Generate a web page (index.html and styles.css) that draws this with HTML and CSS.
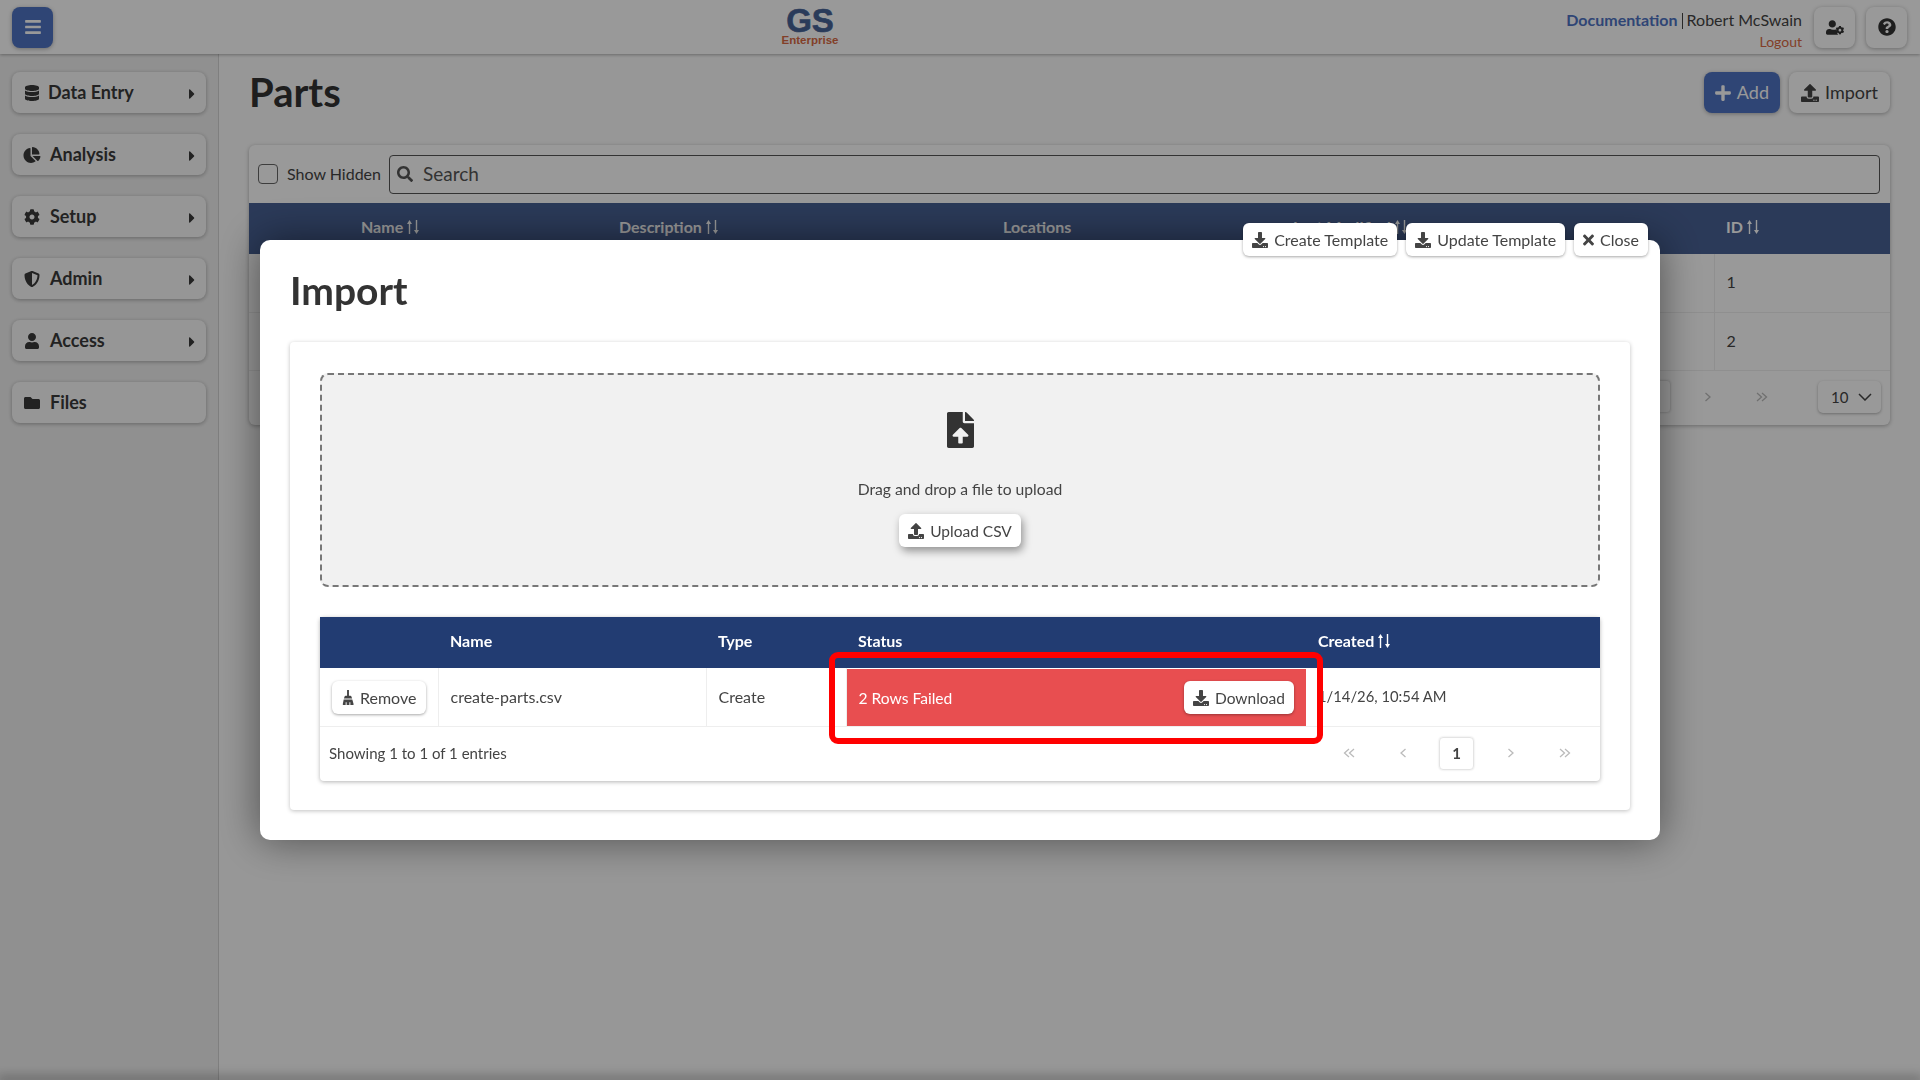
FILE: index.html
```html
<!DOCTYPE html>
<html lang="en">
<head>
  <meta charset="UTF-8" />
  <title>Parts</title>
  <link rel="stylesheet" href="styles.css">
</head>
<body>

  <svg class="sprite" xmlns="http://www.w3.org/2000/svg">
    <symbol id="i-bars" viewBox="0 0 448 512"><path d="M16 132h416c8.837 0 16-7.163 16-16V76c0-8.837-7.163-16-16-16H16C7.163 60 0 67.163 0 76v40c0 8.837 7.163 16 16 16zm0 160h416c8.837 0 16-7.163 16-16v-40c0-8.837-7.163-16-16-16H16c-8.837 0-16 7.163-16 16v40c0 8.837 7.163 16 16 16zm0 160h416c8.837 0 16-7.163 16-16v-40c0-8.837-7.163-16-16-16H16c-8.837 0-16 7.163-16 16v40c0 8.837 7.163 16 16 16z"/></symbol>
    <symbol id="i-database" viewBox="0 0 448 512"><path d="M448 73.143v45.714C448 159.143 347.667 192 224 192S0 159.143 0 118.857V73.143C0 32.857 100.333 0 224 0s224 32.857 224 73.143zM448 176v102.857C448 319.143 347.667 352 224 352S0 319.143 0 278.857V176c48.125 33.143 136.208 48.572 224 48.572S399.874 209.143 448 176zm0 160v102.857C448 479.143 347.667 512 224 512S0 479.143 0 438.857V336c48.125 33.143 136.208 48.572 224 48.572S399.874 369.143 448 336z"/></symbol>
    <symbol id="i-pie" viewBox="0 0 544 512"><path d="M527.79 288H290.5l158.03 158.03c6.04 6.04 15.98 6.53 22.19.68 38.7-36.46 65.32-85.61 73.13-140.86 1.34-9.46-6.51-17.85-16.06-17.85zm-15.83-64.8C503.72 103.74 408.26 8.28 288.8.04 279.68-.59 272 7.1 272 16.24V240h223.77c9.14 0 16.82-7.68 16.19-16.8zM224 288V50.71c0-9.55-8.39-17.4-17.84-16.06C86.99 51.49-4.1 155.6.14 280.37 4.5 408.51 114.83 513.59 243.03 511.98c50.4-.63 96.97-16.87 135.26-44.03 7.9-5.6 8.42-17.23 1.57-24.08L224 288z"/></symbol>
    <symbol id="i-cog" viewBox="0 0 512 512"><path d="M487.4 315.7l-42.6-24.6c4.3-23.2 4.3-47 0-70.2l42.6-24.6c4.9-2.8 7.1-8.6 5.5-14-11.1-35.6-30-67.8-54.7-94.6-3.8-4.1-10-5.1-14.8-2.3L380.8 110c-17.9-15.4-38.5-27.3-60.8-35.1V25.8c0-5.6-3.9-10.5-9.4-11.7-36.7-8.2-74.3-7.8-109.2 0-5.5 1.2-9.4 6.1-9.4 11.7V75c-22.2 7.9-42.8 19.8-60.8 35.1L88.7 85.5c-4.9-2.8-11-1.9-14.8 2.3-24.7 26.7-43.6 58.9-54.7 94.6-1.7 5.4.6 11.2 5.5 14L67.3 221c-4.3 23.2-4.3 47 0 70.2l-42.6 24.6c-4.9 2.8-7.1 8.6-5.5 14 11.1 35.6 30 67.8 54.7 94.6 3.8 4.1 10 5.1 14.8 2.3l42.6-24.6c17.9 15.4 38.5 27.3 60.8 35.1v49.2c0 5.6 3.9 10.5 9.4 11.7 36.7 8.2 74.3 7.8 109.2 0 5.5-1.2 9.4-6.1 9.4-11.7v-49.2c22.2-7.9 42.8-19.8 60.8-35.1l42.6 24.6c4.9 2.8 11 1.9 14.8-2.3 24.7-26.7 43.6-58.9 54.7-94.6 1.5-5.5-.7-11.3-5.6-14.1zM256 336c-44.1 0-80-35.9-80-80s35.9-80 80-80 80 35.9 80 80-35.9 80-80 80z"/></symbol>
    <symbol id="i-shield" viewBox="0 0 512 512"><path d="M466.5 83.7l-192-80a48.15 48.15 0 0 0-36.9 0l-192 80C27.7 91.1 16 108.6 16 128c0 198.5 114.5 335.7 221.5 380.3 11.8 4.9 25.1 4.9 36.9 0C360.1 472.6 496 349.3 496 128c0-19.4-11.7-36.9-29.5-44.3zM256.1 446.3l-.1-381 175.9 73.3c-3.3 151.4-82.1 261.1-175.8 307.7z"/></symbol>
    <symbol id="i-user" viewBox="0 0 448 512"><path d="M224 256c70.7 0 128-57.3 128-128S294.7 0 224 0 96 57.3 96 128s57.3 128 128 128zm89.6 32h-16.7c-22.2 10.2-46.9 16-72.9 16s-50.6-5.8-72.9-16h-16.7C60.2 288 0 348.2 0 422.4V464c0 26.5 21.5 48 48 48h352c26.5 0 48-21.5 48-48v-41.6c0-74.2-60.2-134.4-134.4-134.4z"/></symbol>
    <symbol id="i-folder" viewBox="0 0 512 512"><path d="M464 128H272l-64-64H48C21.49 64 0 85.49 0 112v288c0 26.51 21.49 48 48 48h416c26.51 0 48-21.49 48-48V176c0-26.51-21.49-48-48-48z"/></symbol>
    <symbol id="i-caret" viewBox="0 0 192 512"><path d="M0 384.662V127.338c0-17.818 21.543-26.741 34.142-14.142l128.662 128.662c7.81 7.81 7.81 20.474 0 28.284L34.142 398.804C21.543 411.404 0 402.48 0 384.662z"/></symbol>
    <symbol id="i-user-cog" viewBox="0 0 640 512"><path d="M610.5 373.3c2.6-14.1 2.6-28.5 0-42.6l25.8-14.9c3-1.7 4.3-5.2 3.3-8.5-6.7-21.6-18.2-41.2-33.2-57.4-2.3-2.5-6-3.1-9-1.4l-25.8 14.9c-10.9-9.3-23.4-16.5-36.9-21.3v-29.8c0-3.4-2.4-6.4-5.7-7.1-22.3-5-45-4.8-66.2 0-3.3.7-5.7 3.7-5.7 7.1v29.8c-13.5 4.8-26 12-36.9 21.3l-25.8-14.9c-2.9-1.7-6.7-1.1-9 1.4-15 16.2-26.5 35.8-33.2 57.4-1 3.3.4 6.8 3.3 8.5l25.8 14.9c-2.6 14.1-2.6 28.5 0 42.6l-25.8 14.9c-3 1.7-4.3 5.2-3.3 8.5 6.7 21.6 18.2 41.1 33.2 57.4 2.3 2.5 6 3.1 9 1.4l25.8-14.9c10.9 9.3 23.4 16.5 36.9 21.3v29.8c0 3.4 2.4 6.4 5.7 7.1 22.3 5 45 4.8 66.2 0 3.3-.7 5.7-3.7 5.7-7.1v-29.8c13.5-4.8 26-12 36.9-21.3l25.8 14.9c2.9 1.7 6.7 1.1 9-1.4 15-16.2 26.5-35.8 33.2-57.4 1-3.3-.4-6.8-3.3-8.5l-25.8-14.9zM496 400.5c-26.8 0-48.5-21.8-48.5-48.5s21.8-48.5 48.5-48.5 48.5 21.8 48.5 48.5-21.7 48.5-48.5 48.5zM224 256c70.7 0 128-57.3 128-128S294.7 0 224 0 96 57.3 96 128s57.3 128 128 128zm201.2 226.5c-2.3 0-4.6-.3-6.8-1-4.6-1.4-8.7-4-11.9-7.5-16.4-17.7-29-39.4-36.3-62.6-3.7-11.9 1.2-24.6 11.7-30.7l4.4-2.5c-.5-3.3-.5-8.7 0-12l-4.4-2.5c-10.5-6.1-15.4-18.8-11.7-30.7.9-2.7 2-5.3 3.1-8-2.1-.2-4.1-.6-6.2-.6h-16.7c-22.2 10.2-46.9 16-72.9 16s-50.6-5.8-72.9-16h-16.7C60.2 288 0 348.2 0 422.4V464c0 26.5 21.5 48 48 48h352c8.7 0 16.9-2.4 24-6.5-1-5.5 1.2-11.4 1.2-23z"/></symbol>
    <symbol id="i-question" viewBox="0 0 512 512"><path d="M504 256c0 136.997-111.043 248-248 248S8 392.997 8 256C8 119.083 119.043 8 256 8s248 111.083 248 248zM262.655 90c-54.497 0-89.255 22.957-116.549 63.758-3.536 5.286-2.353 12.415 2.715 16.258l34.699 26.31c5.205 3.947 12.621 3.008 16.665-2.122 17.864-22.658 30.113-35.797 57.303-35.797 20.429 0 45.698 13.148 45.698 32.958 0 14.976-12.363 22.667-32.534 33.976C247.128 238.528 216 254.941 216 296v4c0 6.627 5.373 12 12 12h56c6.627 0 12-5.373 12-12v-1.333c0-28.462 83.186-29.647 83.186-106.667 0-58.002-60.165-102-116.531-102zM256 338c-25.365 0-46 20.635-46 46 0 25.364 20.635 46 46 46s46-20.636 46-46c0-25.365-20.635-46-46-46z"/></symbol>
    <symbol id="i-plus" viewBox="0 0 448 512"><path d="M416 208H272V64c0-17.67-14.33-32-32-32h-32c-17.67 0-32 14.33-32 32v144H32c-17.67 0-32 14.33-32 32v32c0 17.67 14.33 32 32 32h144v144c0 17.67 14.33 32 32 32h32c17.67 0 32-14.33 32-32V304h144c17.67 0 32-14.33 32-32v-32c0-17.67-14.33-32-32-32z"/></symbol>
    <symbol id="i-upload" viewBox="0 0 512 512"><path d="M296 384h-80c-13.3 0-24-10.7-24-24V192h-87.7c-17.8 0-26.7-21.5-14.1-34.1L242.3 5.7c7.5-7.5 19.8-7.5 27.3 0l152.2 152.2c12.6 12.6 3.7 34.1-14.1 34.1H320v168c0 13.3-10.7 24-24 24zm216-8v112c0 13.3-10.7 24-24 24H24c-13.3 0-24-10.7-24-24V376c0-13.3 10.7-24 24-24h136v8c0 30.9 25.1 56 56 56h80c30.9 0 56-25.1 56-56v-8h136c13.3 0 24 10.7 24 24zm-124 88c0-11-9-20-20-20s-20 9-20 20 9 20 20 20 20-9 20-20zm64 0c0-11-9-20-20-20s-20 9-20 20 9 20 20 20 20-9 20-20z"/></symbol>
    <symbol id="i-download" viewBox="0 0 512 512"><path d="M216 0h80c13.3 0 24 10.7 24 24v168h87.7c17.8 0 26.7 21.5 14.1 34.1L269.7 378.3c-7.5 7.5-19.8 7.5-27.3 0L90.1 226.1c-12.6-12.6-3.7-34.1 14.1-34.1H192V24c0-13.3 10.7-24 24-24zm296 376v112c0 13.3-10.7 24-24 24H24c-13.3 0-24-10.7-24-24V376c0-13.3 10.7-24 24-24h146.7l49 49c20.1 20.1 52.5 20.1 72.6 0l49-49H488c13.3 0 24 10.7 24 24zm-124 88c0-11-9-20-20-20s-20 9-20 20 9 20 20 20 20-9 20-20zm64 0c0-11-9-20-20-20s-20 9-20 20 9 20 20 20 20-9 20-20z"/></symbol>
    <symbol id="i-times" viewBox="0 0 352 512"><path d="M242.72 256l100.07-100.07c12.28-12.28 12.28-32.19 0-44.48l-22.24-22.24c-12.28-12.28-32.19-12.28-44.48 0L176 189.28 75.93 89.21c-12.28-12.28-32.19-12.28-44.48 0L9.21 111.45c-12.28 12.28-12.28 32.19 0 44.48L109.28 256 9.21 356.07c-12.28 12.28-12.28 32.19 0 44.48l22.24 22.24c12.28 12.28 32.2 12.28 44.48 0L176 322.72l100.07 100.07c12.28 12.28 32.2 12.28 44.48 0l22.24-22.24c12.28-12.28 12.28-32.19 0-44.48L242.72 256z"/></symbol>
    <symbol id="i-search" viewBox="0 0 512 512"><path d="M505 442.7L405.3 343c-4.5-4.5-10.6-7-17-7H372c27.6-35.3 44-79.7 44-128C416 93.1 322.9 0 208 0S0 93.1 0 208s93.1 208 208 208c48.3 0 92.7-16.4 128-44v16.3c0 6.4 2.5 12.5 7 17l99.7 99.7c9.4 9.4 24.6 9.4 33.9 0l28.3-28.3c9.4-9.4 9.4-24.6.1-34zM208 336c-70.7 0-128-57.2-128-128 0-70.7 57.2-128 128-128 70.7 0 128 57.2 128 128 0 70.7-57.2 128-128 128z"/></symbol>
    <symbol id="i-file-upload" viewBox="0 0 384 512"><path d="M224 136V0H24C10.7 0 0 10.7 0 24v464c0 13.3 10.7 24 24 24h336c13.3 0 24-10.7 24-24V160H248c-13.2 0-24-10.8-24-24zm65.18 216.01H224v80c0 8.84-7.16 16-16 16h-32c-8.84 0-16-7.16-16-16v-80H94.82c-14.28 0-21.41-17.29-11.27-27.36l96.42-95.7c6.65-6.61 17.39-6.61 24.04 0l96.42 95.7c10.15 10.07 3.03 27.36-11.25 27.36zM377 105L279.1 7c-4.5-4.5-10.6-7-17-7H256v128h128v-6.1c0-6.3-2.5-12.4-7-16.9z"/></symbol>
    <symbol id="i-broom" viewBox="0 0 12 16"><path d="M5 0h2v6h1.600c.5 0 .9.3 1 .8L10.400 9H1.600l.8-2.200c.1-.5.5-.8 1-.8H5zM1.400 10h9.200l1.400 5.200c.1.400-.2.800-.6.800H8.500V13H7.500v3h-3V13H3.500v3H1c-.4 0-.7-.4-.6-.8z"/></symbol>
    <symbol id="i-sort" viewBox="0 0 14 14"><path d="M3.500 0 6 4H4.200v10H2.800V4H1zM10.500 14 8 10h1.800V0h1.400v10H13z"/></symbol>
    <symbol id="i-first" viewBox="0 0 12 10"><path d="M6 1 1.500 5 6 9M11 1 6.500 5 11 9"/></symbol>
    <symbol id="i-prev" viewBox="0 0 12 10"><path d="M8.500 1 4 5l4.500 4"/></symbol>
    <symbol id="i-next" viewBox="0 0 12 10"><path d="M3.500 1 8 5 3.500 9"/></symbol>
    <symbol id="i-last" viewBox="0 0 12 10"><path d="M1 1l4.500 4L1 9M6 1l4.500 4L6 9"/></symbol>
  </svg>

  <div class="app">

    <header class="topbar">
      <button class="square-button primary menu-button"><svg class="icon"><use href="#i-bars"/></svg></button>
      <div class="logo">
        <span class="logo-top">GS</span>
        <span class="logo-bottom">Enterprise</span>
      </div>
      <div class="user-area">
        <div class="user-text">
          <div><a class="doc-link">Documentation</a><span class="user-sep"></span>Robert McSwain</div>
          <a class="logout">Logout</a>
        </div>
        <button class="square-button"><svg class="icon user-cog"><use href="#i-user-cog"/></svg></button>
        <button class="square-button"><svg class="icon"><use href="#i-question"/></svg></button>
      </div>
    </header>

    <div class="shell">
      <nav class="sidebar">
        <a class="nav-item"><svg class="icon"><use href="#i-database"/></svg><span class="nav-label nav-data">Data Entry</span><svg class="caret"><use href="#i-caret"/></svg></a>
        <a class="nav-item"><svg class="icon"><use href="#i-pie"/></svg><span class="nav-label">Analysis</span><svg class="caret"><use href="#i-caret"/></svg></a>
        <a class="nav-item"><svg class="icon"><use href="#i-cog"/></svg><span class="nav-label">Setup</span><svg class="caret"><use href="#i-caret"/></svg></a>
        <a class="nav-item"><svg class="icon"><use href="#i-shield"/></svg><span class="nav-label">Admin</span><svg class="caret"><use href="#i-caret"/></svg></a>
        <a class="nav-item"><svg class="icon"><use href="#i-user"/></svg><span class="nav-label">Access</span><svg class="caret"><use href="#i-caret"/></svg></a>
        <a class="nav-item"><svg class="icon"><use href="#i-folder"/></svg><span class="nav-label">Files</span></a>
      </nav>

      <main class="content">
        <div class="title-row">
          <h1 class="page-title">Parts</h1>
          <div class="title-actions">
            <button class="btn btn-large primary"><svg class="icon"><use href="#i-plus"/></svg>Add</button>
            <button class="btn btn-large"><svg class="icon"><use href="#i-upload"/></svg>Import</button>
          </div>
        </div>

        <section class="card">
          <div class="toolbar">
            <span class="checkbox"></span>
            <span class="toolbar-label">Show Hidden</span>
            <div class="search">
              <svg class="icon"><use href="#i-search"/></svg>
              <span>Search</span>
            </div>
          </div>
          <table class="grid parts-grid">
            <colgroup>
              <col class="p-actions"><col class="p-name"><col class="p-desc"><col class="p-loc"><col class="p-mod"><col class="p-id">
            </colgroup>
            <thead>
              <tr>
                <th></th>
                <th>Name<svg class="sort"><use href="#i-sort"/></svg></th>
                <th>Description<svg class="sort"><use href="#i-sort"/></svg></th>
                <th>Locations</th>
                <th>Last Modified<svg class="sort"><use href="#i-sort"/></svg></th>
                <th>ID<svg class="sort"><use href="#i-sort"/></svg></th>
              </tr>
            </thead>
            <tbody>
              <tr><td></td><td></td><td></td><td></td><td></td><td>1</td></tr>
              <tr><td></td><td></td><td></td><td></td><td></td><td>2</td></tr>
            </tbody>
          </table>
          <div class="grid-footer parts-footer">
            <div class="pager">
              <span class="page-link"><svg class="page-arrow"><use href="#i-first"/></svg></span>
              <span class="page-link"><svg class="page-arrow"><use href="#i-prev"/></svg></span>
              <span class="page-link current">1</span>
              <span class="page-link"><svg class="page-arrow"><use href="#i-next"/></svg></span>
              <span class="page-link"><svg class="page-arrow"><use href="#i-last"/></svg></span>
            </div>
            <div class="page-size">10<svg viewBox="0 0 14 8"><path d="M1 1l6 6 6-6" fill="none" stroke="currentColor" stroke-width="1.500"/></svg></div>
          </div>
        </section>
      </main>
    </div>

    <div class="bottom-edge"></div>
  </div>

  <!-- Import dialog -->
  <div class="overlay">
    <div class="modal">
      <div class="modal-actions">
        <button class="btn btn-small"><svg class="icon"><use href="#i-download"/></svg>Create Template</button>
        <button class="btn btn-small"><svg class="icon"><use href="#i-download"/></svg>Update Template</button>
        <button class="btn btn-small"><svg class="icon icon-times"><use href="#i-times"/></svg>Close</button>
      </div>
      <h1 class="page-title">Import</h1>
      <section class="modal-card">
        <div class="dropzone">
          <svg class="icon drop-icon"><use href="#i-file-upload"/></svg>
          <div class="drop-text">Drag and drop a file to upload</div>
          <button class="btn btn-small raised"><svg class="icon"><use href="#i-upload"/></svg>Upload CSV</button>
        </div>

        <div class="import-card">
          <table class="grid import-grid">
            <colgroup>
              <col class="i-actions"><col class="i-name"><col class="i-type"><col class="i-status"><col>
            </colgroup>
            <thead>
              <tr>
                <th></th>
                <th>Name</th>
                <th>Type</th>
                <th>Status</th>
                <th>Created<svg class="sort"><use href="#i-sort"/></svg></th>
              </tr>
            </thead>
            <tbody>
              <tr>
                <td class="center"><button class="btn btn-small btn-remove"><svg class="icon icon-broom"><use href="#i-broom"/></svg>Remove</button></td>
                <td>create-parts.csv</td>
                <td>Create</td>
                <td class="status-cell">
                  <div class="status-failed">
                    <span>2 Rows Failed</span>
                    <button class="btn btn-small"><svg class="icon"><use href="#i-download"/></svg>Download</button>
                  </div>
                </td>
                <td class="date-cell">1/14/26, 10:54 AM</td>
              </tr>
            </tbody>
          </table>
          <div class="grid-footer">
            <span class="entries">Showing 1 to 1 of 1 entries</span>
            <div class="pager">
              <span class="page-link"><svg class="page-arrow"><use href="#i-first"/></svg></span>
              <span class="page-link"><svg class="page-arrow"><use href="#i-prev"/></svg></span>
              <span class="page-link current">1</span>
              <span class="page-link"><svg class="page-arrow"><use href="#i-next"/></svg></span>
              <span class="page-link"><svg class="page-arrow"><use href="#i-last"/></svg></span>
            </div>
          </div>
        </div>
      </section>
    </div>
  </div>

  <!-- red highlight drawn over the screenshot -->
  <div class="highlight"></div>

</body>
</html>
```

FILE: styles.css
```css
html, body {
  height: 100%;
  margin: 0;
  padding: 0;
  font-family: Lato, "Liberation Sans", sans-serif;
  color: #444;
}

body {
  overflow: hidden;
  background-color: #fff;
}

button {
  font-family: inherit;
  cursor: pointer;
}

.sprite {
  display: none;
}

.icon {
  width: 16px;
  height: 16px;
  fill: currentColor;
  flex: none;
}

.app {
  height: 100%;
  display: flex;
  flex-direction: column;
}

/* top bar */
.topbar {
  height: 54px;
  flex: none;
  display: flex;
  align-items: center;
  justify-content: space-between;
  position: relative;
  padding: 0 13px 0 12px;
  box-sizing: border-box;
  background-color: #fff;
  box-shadow: 0 1px 3px rgba(0, 0, 0, 0.3);
  z-index: 1;
}

.square-button {
  width: 41px;
  height: 41px;
  border: none;
  border-radius: 8px;
  background-color: #fff;
  color: #333;
  box-shadow: 0 1px 4px rgba(0, 0, 0, 0.3);
  display: flex;
  align-items: center;
  justify-content: center;
  padding: 0;
}

.square-button .icon {
  width: 18px;
  height: 18px;
}

.square-button .user-cog {
  width: 18px;
  height: 15px;
}

.primary {
  background-color: #4f74c4;
  color: #fff;
}

.logo {
  position: absolute;
  left: 780px;
  top: 8px;
  width: 60px;
  display: flex;
  flex-direction: column;
  align-items: center;
  font-family: "Liberation Sans", sans-serif;
  font-weight: bold;
}

.logo-top {
  font-size: 33px;
  line-height: 26px;
  color: #466396;
  -webkit-text-stroke: 0.6px #466396;
}

.logo-bottom {
  font-size: 11.500px;
  line-height: 12px;
  color: #d96a44;
}

.user-area {
  display: flex;
  align-items: center;
  gap: 11px;
}

.user-text {
  text-align: right;
  font-size: 16px;
  line-height: 21px;
  margin-right: 1px;
  margin-top: 6px;
}

.doc-link {
  color: #4f74c4;
  font-weight: 700;
}

.user-sep {
  display: inline-block;
  width: 1px;
  height: 16px;
  background-color: #444;
  margin: 0 4px;
  vertical-align: -3px;
}

.logout {
  color: #d96a44;
  font-size: 14px;
}

/* sidebar and page */
.shell {
  flex: 1;
  display: flex;
  min-height: 0;
}

.sidebar {
  width: 219px;
  flex: none;
  box-sizing: border-box;
  padding: 18px 12px;
  display: flex;
  flex-direction: column;
  gap: 21px;
  background-color: #f1f1f1;
  border-right: 1px solid #d4d4d4;
}

.nav-item {
  height: 41px;
  display: flex;
  align-items: center;
  padding: 0 11px 0 11px;
  border-radius: 8px;
  background-color: #fafafa;
  box-shadow: 0 1px 4px rgba(0, 0, 0, 0.3);
  font-size: 18px;
  font-weight: 700;
  color: #3a3a3a;
}

.nav-label {
  flex: 1;
  margin-left: 9px;
  margin-top: -2px;
}

.nav-label.nav-data {
  margin-left: 7px;
}

.nav-item .icon {
  width: 18px;
  height: 16px;
}

.caret {
  width: 6px;
  height: 16px;
  fill: currentColor;
  margin-top: 2px;
}

.content {
  flex: 1;
  min-width: 0;
  padding: 18px 30px 0;
  background-color: #fcfcfc;
}

.title-row {
  display: flex;
  align-items: center;
  justify-content: space-between;
  height: 41px;
  margin-bottom: 32px;
}

.page-title {
  margin: 0;
  font-size: 39px;
  line-height: 40px;
  padding-bottom: 2px;
  font-weight: 700;
  color: #333;
}

.title-row .page-title {
  font-size: 40px;
}

.title-actions {
  display: flex;
  gap: 9px;
}

.btn {
  display: inline-flex;
  align-items: center;
  justify-content: center;
  gap: 6px;
  border: none;
  border-radius: 6px;
  background-color: #fff;
  color: #444;
  padding: 0 9px;
  white-space: nowrap;
  box-shadow: 0 1px 4px rgba(0, 0, 0, 0.3);
}

.btn-large {
  height: 41px;
  padding: 0 12px 2px;
  font-size: 18px;
  border-radius: 8px;
}

.btn-large .icon {
  width: 18px;
  height: 18px;
  margin-top: 2px;
}

.btn-large.primary {
  padding: 0 11px 2px;
  background-color: #4f74c4;
  color: #fff;
}

.btn-large.primary .icon {
  width: 16px;
}

.btn-small {
  height: 33px;
  font-size: 16px;
  box-shadow: 0 1px 3px rgba(0, 0, 0, 0.35);
}

.btn-remove {
  padding: 0 10px;
}

.raised {
  font-size: 15.500px;
  box-shadow: 2px 4px 8px rgba(0, 0, 0, 0.4);
}

/* background card */
.card {
  background-color: #fff;
  border-radius: 6px;
  box-shadow: 0 1px 4px rgba(0, 0, 0, 0.3);
}

.toolbar {
  height: 58px;
  display: flex;
  align-items: center;
  padding: 0 10px 0 9px;
  box-sizing: border-box;
}

.checkbox {
  width: 18px;
  height: 18px;
  border: 1px solid #666;
  border-radius: 4px;
  flex: none;
}

.toolbar-label {
  font-size: 16px;
  margin: 0 8px 0 9px;
  padding-bottom: 2px;
  white-space: nowrap;
}

.search {
  flex: 1;
  height: 39px;
  box-sizing: border-box;
  display: flex;
  align-items: center;
  gap: 10px;
  padding: 0 7px;
  border: 1px solid #555;
  border-radius: 4px;
  font-size: 19px;
  line-height: 36px;
  color: #555;
}

.grid {
  width: 100%;
  table-layout: fixed;
  border-collapse: collapse;
  font-size: 16px;
}

.grid th {
  height: 51px;
  box-sizing: border-box;
  padding: 0 12px 4px;
  text-align: left;
  font-weight: 700;
  color: #fff;
  background-color: #486194;
  white-space: nowrap;
}

.grid td {
  height: 58px;
  padding: 0 12px 2px;
  border-bottom: 1px solid #eee;
  border-right: 1px solid #eee;
  box-sizing: border-box;
}

.grid td:last-child {
  border-right: none;
}

.sort {
  width: 14px;
  height: 14px;
  margin-left: 3px;
  vertical-align: -1px;
  fill: currentColor;
}

.p-actions { width: 100px; }
.p-name { width: 258px; }
.p-desc { width: 384px; }
.p-loc { width: 290px; }
.p-mod { width: 433px; }
.p-id { width: 176px; }

.grid-footer {
  height: 54px;
  box-sizing: border-box;
  display: flex;
  align-items: center;
  justify-content: space-between;
  padding: 0 18px 2px 9px;
}

.parts-footer {
  justify-content: flex-end;
  padding-right: 9px;
}

.parts-footer .pager {
  margin-right: 39px;
}

.pager {
  display: flex;
  gap: 19px;
}

.page-link {
  width: 35px;
  height: 33px;
  box-sizing: border-box;
  display: flex;
  align-items: center;
  justify-content: center;
  color: #bbb;
}

.page-arrow {
  width: 12px;
  height: 10px;
  fill: none;
  stroke: currentColor;
  stroke-width: 1.300;
}

.page-link.current {
  border: 1px solid #e4e4e4;
  border-radius: 4px;
  color: #444;
  font-weight: 700;
  font-size: 15px;
  box-shadow: 0 0 2px rgba(0, 0, 0, 0.15);
}

.page-size {
  width: 63px;
  height: 32px;
  box-sizing: border-box;
  display: flex;
  align-items: center;
  justify-content: space-between;
  padding: 0 9px 0 13px;
  border-radius: 5px;
  font-size: 15px;
  box-shadow: 0 1px 3px rgba(0, 0, 0, 0.3);
}

.page-size svg {
  width: 14px;
  height: 8px;
}

/* dialog */
.overlay {
  position: fixed;
  inset: 0;
  background-color: rgba(0, 0, 0, 0.4);
  display: flex;
  justify-content: center;
  align-items: flex-start;
  padding-top: 240px;
  z-index: 5;
}

.modal {
  position: relative;
  width: 1400px;
  height: 600px;
  box-sizing: border-box;
  padding: 30px 30px 0;
  border-radius: 10px;
  background-color: #fff;
  box-shadow: 0 0 40px rgba(0, 0, 0, 0.5);
}

.modal-actions {
  position: absolute;
  top: -17px;
  right: 12px;
  display: flex;
  gap: 9px;
}

.modal-card {
  margin-top: 30px;
  height: 468px;
  box-sizing: border-box;
  padding: 31px 30px 0;
  border-radius: 4px;
  box-shadow: 0 1px 4px rgba(0, 0, 0, 0.25);
}

.dropzone {
  height: 214px;
  box-sizing: border-box;
  padding-top: 36px;
  display: flex;
  flex-direction: column;
  align-items: center;
  border: 2px dashed #777;
  border-radius: 8px;
  background-color: #f1f1f1;
  margin-bottom: 30px;
}

.drop-icon {
  width: 27px;
  height: 36px;
  color: #333;
  margin-top: 1px;
}

.drop-text {
  font-size: 15.700px;
  line-height: 20px;
  margin: 31px 0 15px;
}

.import-card {
  border-radius: 4px;
  box-shadow: 0 1px 4px rgba(0, 0, 0, 0.3);
}

.import-grid th {
  background-color: #223c72;
}

.i-actions { width: 118px; }
.i-name { width: 268px; }
.i-type { width: 140px; }
.i-status { width: 460px; }

.grid .center {
  text-align: center;
  padding-bottom: 0;
}

.icon-broom {
  width: 12px;
  height: 15px;
}

.icon-times {
  width: 11px;
}

.grid .status-cell {
  padding: 1px 0 0 0;
  border-right: none;
  font-size: 15.600px;
}

.status-cell .btn {
  font-size: 15.500px;
}

.date-cell {
  font-size: 14.800px;
}

.status-failed {
  height: 57px;
  box-sizing: border-box;
  display: flex;
  align-items: center;
  justify-content: space-between;
  padding: 0 12px;
  background-color: #e84e50;
  color: #fff;
}

.entries {
  font-size: 15px;
}

.highlight {
  position: fixed;
  left: 829px;
  top: 652px;
  width: 494px;
  height: 92px;
  box-sizing: border-box;
  border: 6px solid #ff0000;
  border-radius: 9px;
  z-index: 10;
}

.bottom-edge {
  height: 0;
  flex: none;
  box-shadow: 0 0 12px 3px rgba(0, 0, 0, 0.4);
  position: relative;
}
```
